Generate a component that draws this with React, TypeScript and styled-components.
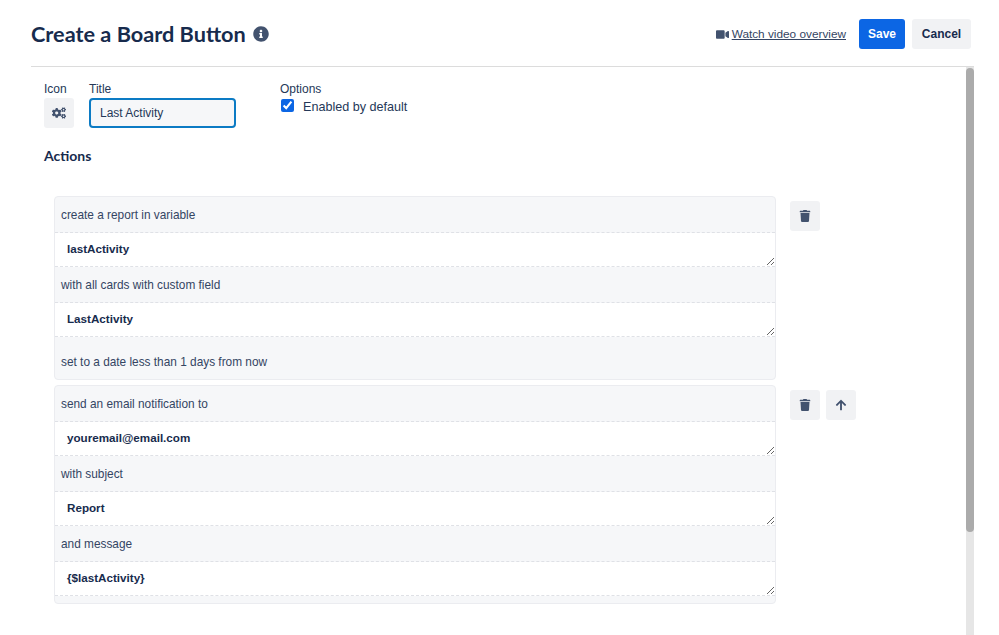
import React from "react";
import styled, { createGlobalStyle } from "styled-components";
import { FaArrowUp, FaCogs, FaInfoCircle, FaTrash, FaVideo } from "react-icons/fa";

const GlobalStyle = createGlobalStyle`
  html, body {
    margin: 0;
    padding: 0;
    height: 100%;
    overflow: hidden;
    background: #ffffff;
    color: #172b4d;
    font-family: "Liberation Sans", Arial, sans-serif;
    font-size: 13px;
  }
`;

const Page = styled.div`
  display: flex;
  flex-direction: column;
  width: 999px;
  height: 635px;
  box-sizing: border-box;
  padding: 0 25px 0 31px;
`;

const Header = styled.header`
  display: flex;
  align-items: center;
  justify-content: space-between;
  flex: 0 0 67px;
  box-sizing: border-box;
  padding: 2px 3px 0 0;
  border-bottom: 1px solid #dcdcdc;
`;

const TitleGroup = styled.div`
  display: flex;
  align-items: center;
  gap: 7px;
`;

const Heading = styled.h1`
  margin: 0;
  font-family: Lato, sans-serif;
  font-size: 21.7px;
  font-weight: 700;
  color: #172b4d;
`;

const InfoIcon = styled(FaInfoCircle)`
  width: 16px;
  height: 16px;
  color: #42526e;
`;

const Actions = styled.div`
  display: flex;
  align-items: center;
`;

const VideoLink = styled.a`
  display: flex;
  align-items: center;
  gap: 3px;
  margin-right: 13px;
  color: #344563;
  font-size: 11.8px;
  text-decoration: underline;
  svg {
    width: 13px;
    height: 13px;
    color: #42526e;
  }
`;

const TextButton = styled.button<{ $primary?: boolean }>`
  height: 30px;
  width: ${(p) => (p.$primary ? "46px" : "59px")};
  padding: 0;
  margin-left: ${(p) => (p.$primary ? "0" : "7px")};
  border: none;
  border-radius: 3px;
  background: ${(p) => (p.$primary ? "#0c66e4" : "#f1f2f4")};
  color: ${(p) => (p.$primary ? "#ffffff" : "#172b4d")};
  font-family: inherit;
  font-size: 12px;
  font-weight: 700;
`;

const Body = styled.div`
  display: flex;
  flex: 1;
  min-height: 0;
`;

const Content = styled.main`
  flex: 1;
  padding: 15px 0 0 13px;
`;

const Scrollbar = styled.div`
  flex: 0 0 8px;
  background: #e6e6e6;
  display: flex;
  flex-direction: column;
`;

const ScrollThumb = styled.div`
  height: 464px;
  margin-top: 1px;
  border-radius: 4px;
  background: #ababab;
`;

const TopRow = styled.div`
  display: flex;
  align-items: flex-start;
`;

const Field = styled.div<{ $width: number }>`
  display: flex;
  flex-direction: column;
  width: ${(p) => p.$width}px;
`;

const FieldLabel = styled.label`
  height: 15px;
  line-height: 15px;
  font-size: 12px;
  color: #253858;
  margin-bottom: 1px;
`;

const IconButton = styled.button<{ $small?: boolean }>`
  display: flex;
  align-items: center;
  justify-content: center;
  width: 30px;
  height: 30px;
  padding: 0;
  border: none;
  border-radius: 3px;
  background: #f1f2f4;
  color: #42526e;
  svg {
    width: ${(p) => (p.$small ? "12px" : "14px")};
    height: ${(p) => (p.$small ? "12px" : "14px")};
  }
`;

const TitleInput = styled.input`
  width: 147px;
  height: 30px;
  box-sizing: border-box;
  padding: 0 9px;
  border: 2px solid #0c7bc4;
  border-radius: 4px;
  background: #f6f7f9;
  color: #253858;
  font-family: inherit;
  font-size: 12px;
  outline: none;
`;

const CheckRow = styled.label`
  display: flex;
  align-items: flex-start;
  gap: 9px;
  height: 16px;
  margin-top: -1px;
  color: #253858;
  font-size: 12.6px;
`;

const CheckBox = styled.input`
  width: 13px;
  height: 13px;
  margin: 2px 0 0 1px;
  accent-color: #0c66e4;
`;

const CheckText = styled.span`
  line-height: 16px;
  padding-top: 2px;
`;

const SectionTitle = styled.h2`
  margin: 19px 0 32px;
  font-family: Lato, sans-serif;
  font-size: 14px;
  line-height: 17px;
  font-weight: 700;
  color: #172b4d;
`;

const ActionList = styled.div`
  display: flex;
  flex-direction: column;
  gap: 5px;
  padding-left: 10px;
`;

const ActionRow = styled.section`
  display: flex;
  align-items: flex-start;
`;

const ActionCard = styled.div`
  width: 722px;
  box-sizing: border-box;
  border: 1px solid #ebecf0;
  border-radius: 4px;
  overflow: hidden;
  background: #f6f7f9;
`;

const ActionText = styled.div<{ $tall?: boolean }>`
  box-sizing: border-box;
  height: ${(p) => (p.$tall ? "42px" : "36px")};
  line-height: ${(p) => (p.$tall ? "50px" : "37px")};
  padding-left: 6px;
  font-size: 11.85px;
  color: #344563;
  border-bottom: ${(p) => (p.$tall ? "none" : "1px dashed #dfe1e6")};
`;

const ActionValue = styled.textarea`
  display: block;
  width: 100%;
  height: 34px;
  box-sizing: border-box;
  padding: 8px 12px 0;
  border: none;
  border-bottom: 1px dashed #dfe1e6;
  background: #ffffff;
  color: #172b4d;
  font-family: inherit;
  font-size: 11.65px;
  font-weight: 700;
  line-height: 15px;
  resize: vertical;
  outline: none;
`;

const CardEnd = styled.div`
  height: 7px;
`;

const RowTools = styled.div`
  display: flex;
  gap: 6px;
  margin: 5px 0 0 14px;
`;

const App: React.FC = () => {
  return (
    <>
      <GlobalStyle />
      <Page>
        <Header>
          <TitleGroup>
            <Heading>Create a Board Button</Heading>
            <InfoIcon />
          </TitleGroup>
          <Actions>
            <VideoLink href="#">
              <FaVideo />
              Watch video overview
            </VideoLink>
            <TextButton $primary>Save</TextButton>
            <TextButton>Cancel</TextButton>
          </Actions>
        </Header>
        <Body>
          <Content>
            <TopRow>
              <Field $width={45}>
                <FieldLabel>Icon</FieldLabel>
                <IconButton>
                  <FaCogs />
                </IconButton>
              </Field>
              <Field $width={191}>
                <FieldLabel>Title</FieldLabel>
                <TitleInput defaultValue="Last Activity" />
              </Field>
              <Field $width={200}>
                <FieldLabel>Options</FieldLabel>
                <CheckRow>
                  <CheckBox type="checkbox" defaultChecked />
                  <CheckText>Enabled by default</CheckText>
                </CheckRow>
              </Field>
            </TopRow>
            <SectionTitle>Actions</SectionTitle>
            <ActionList>
              <ActionRow>
                <ActionCard>
                  <ActionText>create a report in variable</ActionText>
                  <ActionValue defaultValue="lastActivity" />
                  <ActionText>with all cards with custom field</ActionText>
                  <ActionValue defaultValue="LastActivity" />
                  <ActionText $tall>set to a date less than 1 days from now</ActionText>
                </ActionCard>
                <RowTools>
                  <IconButton $small>
                    <FaTrash />
                  </IconButton>
                </RowTools>
              </ActionRow>
              <ActionRow>
                <ActionCard>
                  <ActionText>send an email notification to</ActionText>
                  <ActionValue defaultValue="youremail@email.com" />
                  <ActionText>with subject</ActionText>
                  <ActionValue defaultValue="Report" />
                  <ActionText>and message</ActionText>
                  <ActionValue defaultValue="{$lastActivity}" />
                  <CardEnd />
                </ActionCard>
                <RowTools>
                  <IconButton $small>
                    <FaTrash />
                  </IconButton>
                  <IconButton $small>
                    <FaArrowUp />
                  </IconButton>
                </RowTools>
              </ActionRow>
            </ActionList>
          </Content>
          <Scrollbar>
            <ScrollThumb />
          </Scrollbar>
        </Body>
      </Page>
    </>
  );
};

export default App;
